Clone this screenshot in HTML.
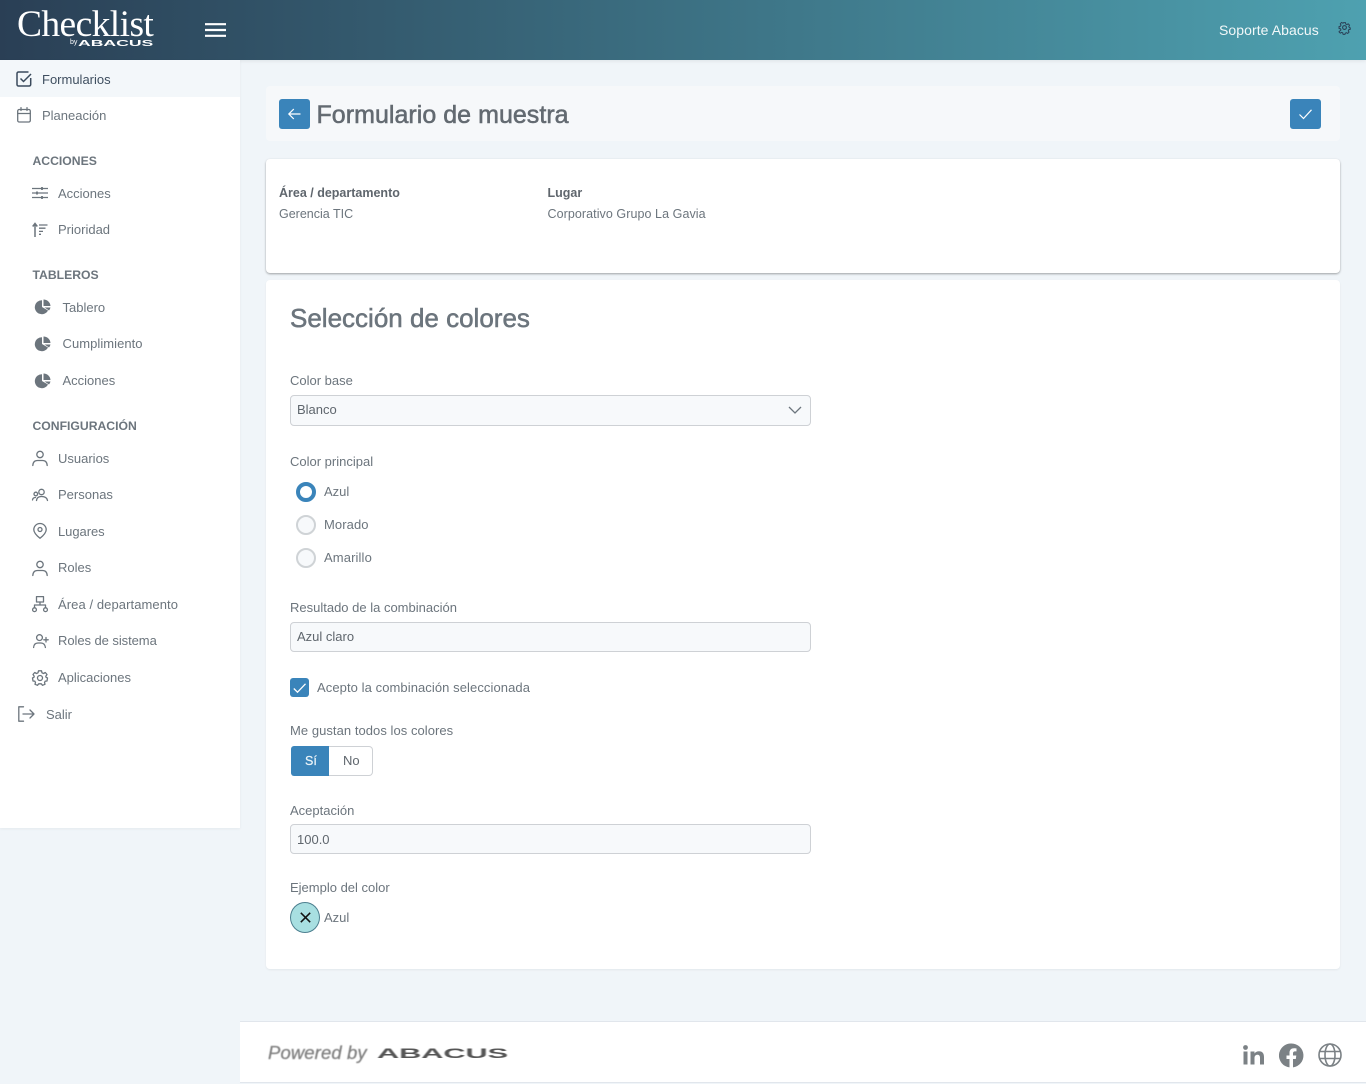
<!DOCTYPE html>
<html lang="es"><head><meta charset="utf-8"><title>Formulario de muestra</title>
<style>
html,body{margin:0;padding:0}
body{width:1366px;height:1084px;position:relative;overflow:hidden;background:#f0f5f9;font-family:"Liberation Sans",Arial,sans-serif;font-size:13px;color:#6c757d}
.a{position:absolute}
.t{position:absolute;white-space:nowrap;line-height:20px;height:20px}
.n{color:#6c757d;font-size:13px;margin-top:1px}
.h{font-weight:700;font-size:12.2px;color:#6c757d;margin-top:1px}
.l{color:#6c757d;font-size:13px;margin-top:1px}
.box{position:absolute;left:290px;width:519px;background:#f7f9fb;border:1px solid #ced1d5;border-radius:4px}
svg{position:absolute;overflow:visible}
.i{fill:none;stroke:#6c757d;stroke-width:1.3;stroke-linecap:round;stroke-linejoin:round}
.radio{position:absolute;left:296px;width:16px;height:16px;border:2px solid #cfd3d6;border-radius:50%;background:#f7f9fb}
</style></head><body>
<div class="a" style="left:0;top:0;width:1366px;height:60px;background:linear-gradient(90deg,#2a3f55 0%,#4ea1b0 100%);box-shadow:0 1px 4px rgba(0,0,0,.08)"></div>
<div class="t" style="left:17px;top:6px;height:38px;line-height:38px;font-family:'Liberation Serif',serif;font-size:37.5px;color:#fff;letter-spacing:-.6px">Checklist</div>
<div class="t" style="left:70px;top:38px;height:10px;line-height:10px;font-size:7px;color:#fff">by</div>
<div class="t" style="left:78px;top:39px;height:10px;line-height:10px;font-size:8px;font-weight:700;color:#fff;transform-origin:0 50%;transform:scaleX(2.2)">ABACUS</div>
<svg style="left:205px;top:23px" width="21" height="14"><path d="M0 1.2H21M0 7H21M0 12.8H21" stroke="#fff" stroke-width="2.2"/></svg>
<div class="t" style="left:1219px;top:20px;font-size:14px;color:#f2f8f9;letter-spacing:.07px">Soporte Abacus</div>
<svg style="left:1338px;top:21px" width="13" height="13" viewBox="0 0 24 24"><circle cx="12" cy="12" r="3.5" fill="none" stroke="#2a3f55" stroke-width="2"/><path d="M10 2h4l.6 3 2.4 1 2.6-1.6 2.8 2.8L20.800 9.800l1 2.400 2 .6v3l-3 .6-1 2.400 1.600 2.600-2.800 2.800-2.600-1.600-2.400 1-.6 2.400h-4l-.6-3-2.400-1-2.600 1.600-2.800-2.800L4.800 17l-1-2.400-3-.6v-4l3-.6 1-2.400L3.200 4.400 6 1.600 8.600 3.200 9.400 3z" transform="translate(1.200 1.200) scale(.9)" fill="none" stroke="#2a3f55" stroke-width="2" stroke-linejoin="round"/></svg>

<div class="a" style="left:0;top:60px;width:240px;height:768px;background:#fff;box-shadow:0 1px 3px rgba(0,0,0,.05)"></div>
<div class="a" style="left:0;top:60px;width:240px;height:37px;background:#f3f7fa"></div>

<svg style="left:16px;top:71px" width="16" height="16" viewBox="0 0 16 16"><path d="M14.700 7V13.500a1.500 1.500 0 0 1-1.500 1.500H2.500A1.500 1.500 0 0 1 1 13.500V2.500A1.500 1.500 0 0 1 2.500 1H12.500" fill="none" stroke="#3a4a5c" stroke-width="1.500"/><path d="M4.500 7.500L7.500 10.500L15 3" fill="none" stroke="#3a4a5c" stroke-width="1.500"/></svg>
<div class="t" style="left:42px;top:70px;color:#3f4f60;font-size:13px">Formularios</div>
<svg style="left:17px;top:107px" width="14" height="16" viewBox="0 0 14 16"><rect x=".7" y="2.500" width="12.600" height="12.500" rx="1.500" class="i"/><path d="M.7 6.500H13.300M4 .7V3.500M10 .7V3.500" class="i"/></svg>
<div class="t n" style="left:42px;top:105px">Planeación</div>

<div class="t h" style="left:32.500px;top:150px">ACCIONES</div>
<svg style="left:32px;top:186px" width="16" height="14" viewBox="0 0 16 14"><path d="M0 2.500H16M0 7H16M0 11.500H16" stroke="#6c757d" stroke-width="1.200"/><path d="M10 1V4M5 5.500V8.500M10 10V13" stroke="#6c757d" stroke-width="1.800"/></svg>
<div class="t n" style="left:58px;top:183px">Acciones</div>
<svg style="left:32px;top:222px" width="16" height="16" viewBox="0 0 16 16"><path d="M3 15V2M.7 4.500L3 1.500L5.300 4.500" fill="none" stroke="#6c757d" stroke-width="1.500"/><path d="M7 3H15.500M7 6.200H13.500M7 9.400H11M7 12.300H9" stroke="#6c757d" stroke-width="1.300"/></svg>
<div class="t n" style="left:58px;top:219px">Prioridad</div>

<div class="t h" style="left:32.500px;top:264px">TABLEROS</div>
<svg style="left:34.500px;top:299px" width="16" height="16" viewBox="0 0 16 16"><path d="M7 1.200A7 7 0 1 0 13 11.500L7 8z" fill="#6c757d"/><path d="M8.500 .5A7 7 0 0 1 15.500 7H8.500z" fill="#6c757d"/><path d="M9.500 8.500H15.500A7 7 0 0 1 14 11.500z" fill="#6c757d"/></svg>
<div class="t n" style="left:62.500px;top:297px">Tablero</div>
<svg style="left:34.500px;top:336px" width="16" height="16" viewBox="0 0 16 16"><path d="M7 1.200A7 7 0 1 0 13 11.500L7 8z" fill="#6c757d"/><path d="M8.500 .5A7 7 0 0 1 15.500 7H8.500z" fill="#6c757d"/><path d="M9.500 8.500H15.500A7 7 0 0 1 14 11.500z" fill="#6c757d"/></svg>
<div class="t n" style="left:62.500px;top:333px;letter-spacing:.05px">Cumplimiento</div>
<svg style="left:34.500px;top:373px" width="16" height="16" viewBox="0 0 16 16"><path d="M7 1.200A7 7 0 1 0 13 11.500L7 8z" fill="#6c757d"/><path d="M8.500 .5A7 7 0 0 1 15.500 7H8.500z" fill="#6c757d"/><path d="M9.500 8.500H15.500A7 7 0 0 1 14 11.500z" fill="#6c757d"/></svg>
<div class="t n" style="left:62.500px;top:370px">Acciones</div>

<div class="t h" style="left:32.500px;top:415px">CONFIGURACIÓN</div>
<svg style="left:32px;top:450px" width="16" height="16" viewBox="0 0 16 16"><circle cx="8" cy="4.500" r="3.200" class="i"/><path d="M.8 15.500C1 12 3 10.500 5.500 10.500H10.500C13 10.500 15 12 15.200 15.500" class="i"/></svg>
<div class="t n" style="left:58px;top:448px">Usuarios</div>
<svg style="left:32px;top:487px" width="16" height="15" viewBox="0 0 16 15"><circle cx="9.500" cy="5" r="2.700" class="i" stroke-width="1.100"/><circle cx="3.800" cy="7" r="1.800" class="i" stroke-width="1.100"/><path d="M4.500 13.500C4.800 10.500 6.500 9.500 9.500 9.500S15 10.500 15.500 13.500M.5 13C.7 11.300 1.500 10.500 3.500 10.500" class="i" stroke-width="1.100"/></svg>
<div class="t n" style="left:58px;top:484px">Personas</div>
<svg style="left:33px;top:523px" width="14" height="16" viewBox="0 0 14 16"><path d="M7 15.300C3 12 .8 9.500 .8 6.700A6.200 6.200 0 0 1 13.200 6.700C13.200 9.500 11 12 7 15.300z" class="i"/><circle cx="7" cy="6.500" r="2" class="i"/></svg>
<div class="t n" style="left:58px;top:521px;letter-spacing:-.05px">Lugares</div>
<svg style="left:32px;top:560px" width="16" height="16" viewBox="0 0 16 16"><circle cx="8" cy="4.500" r="3.200" class="i"/><path d="M.8 15.500C1 12 3 10.500 5.500 10.500H10.500C13 10.500 15 12 15.200 15.500" class="i"/></svg>
<div class="t n" style="left:58px;top:557px">Roles</div>
<svg style="left:32px;top:596px" width="16" height="16" viewBox="0 0 16 16"><rect x="4.500" y=".6" width="7" height="5.400" class="i" stroke-width="1"/><path d="M8 6V9M2.500 11.500V9H13.500V11.500" class="i" stroke-width="1"/><circle cx="2.500" cy="13.700" r="1.900" class="i" stroke-width="1"/><circle cx="13.500" cy="13.700" r="1.900" class="i" stroke-width="1"/></svg>
<div class="t n" style="left:58px;top:594px;letter-spacing:.08px">Área / departamento</div>
<svg style="left:33px;top:634px" width="16" height="14" viewBox="0 0 16 14"><circle cx="6.500" cy="3.600" r="2.900" class="i" stroke-width="1.200"/><path d="M.6 13.500C.8 10.500 2.500 9 5 9H8C10.500 9 12 10.500 12.400 13.500M13 3.500V8M10.800 5.800H15.200" class="i" stroke-width="1.200"/></svg>
<div class="t n" style="left:58px;top:630px;letter-spacing:-.06px">Roles de sistema</div>
<svg style="left:32px;top:670px" width="16" height="16" viewBox="0 0 16 16"><circle cx="8" cy="8" r="2.500" class="i" stroke-width="1.100"/><path d="M6.500.8H9.500L10 2.800L11.500 3.500L13.300 2.500L15 4.500L13.800 6.200L14 7.200L15.500 8L15 11L13.200 11.200L12.500 12.500L13 14.300L10.500 15.300L9.300 13.800H6.700L5.500 15.300L3 14.300L3.500 12.500L2.800 11.200L1 11L.5 8L2 7.200L2.200 6.200L1 4.500L2.700 2.500L4.500 3.500L6 2.800z" class="i" stroke-width="1.100"/></svg>
<div class="t n" style="left:58px;top:667px">Aplicaciones</div>
<svg style="left:18px;top:706px" width="17" height="16" viewBox="0 0 17 16"><path d="M5.500 .8H.8V15.200H5.500" class="i"/><path d="M5 8H16M12 4L16 8L12 12" class="i"/></svg>
<div class="t n" style="left:46px;top:704px">Salir</div>

<div class="a" style="left:266px;top:86px;width:1074px;height:55px;background:#f6f8fa;border-radius:4px"></div>
<div class="a" style="left:279px;top:99px;width:31px;height:30px;background:#3a84ba;border-radius:3px"></div>
<svg style="left:288px;top:108px" width="13" height="12" viewBox="0 0 13 12"><path d="M12.500 6H1M5.800 1L.8 6L5.800 11" fill="none" stroke="#fff" stroke-width="1.200"/></svg>
<div class="t" style="left:316.500px;top:100px;height:30px;line-height:30px;font-size:25px;font-weight:400;color:#636a71;-webkit-text-stroke:.55px #636a71;letter-spacing:.03px">Formulario de muestra</div>
<div class="a" style="left:1290px;top:99px;width:31px;height:30px;background:#3a84ba;border-radius:3px"></div>
<svg style="left:1299px;top:109px" width="13" height="10" viewBox="0 0 13 10"><path d="M.5 5.500L4.500 9.500L12.500 .8" fill="none" stroke="#fff" stroke-width="1.200"/></svg>

<div class="a" style="left:266px;top:159px;width:1074px;height:114px;background:#fff;border-radius:4px;box-shadow:0 1px 2px rgba(0,0,0,.35)"></div>
<div class="t" style="left:279px;top:183px;font-weight:700;font-size:12.500px;color:#5f666d">Área / departamento</div>
<div class="t" style="left:279px;top:204px;font-size:12.500px;color:#6c757d">Gerencia TIC</div>
<div class="t" style="left:547.500px;top:183px;font-weight:700;font-size:12.500px;color:#5f666d">Lugar</div>
<div class="t" style="left:547.500px;top:204px;font-size:12.500px;color:#6c757d;letter-spacing:.07px">Corporativo Grupo La Gavia</div>

<div class="a" style="left:266px;top:280px;width:1074px;height:689px;background:#fff;border-radius:4px;box-shadow:0 1px 2px rgba(0,0,0,.06)"></div>
<div class="t" style="left:290px;top:302px;height:32px;line-height:32px;font-size:26px;color:#6c757d;-webkit-text-stroke:.55px #6c757d">Selección de colores</div>

<div class="t l" style="left:290px;top:370px">Color base</div>
<div class="box" style="top:395px;height:29px"></div>
<div class="t" style="left:297px;top:400px;color:#5f666d">Blanco</div>
<svg style="left:788px;top:406px" width="14" height="8" viewBox="0 0 14 8"><path d="M1 1L7 7L13 1" fill="none" stroke="#6c757d" stroke-width="1.300"/></svg>

<div class="t l" style="left:290px;top:451px">Color principal</div>
<div class="radio" style="top:482px;border:4px solid #3a84ba;width:12px;height:12px;background:#fff"></div>
<div class="t l" style="left:324px;top:481px">Azul</div>
<div class="radio" style="top:515px"></div>
<div class="t l" style="left:324px;top:514px;letter-spacing:.08px">Morado</div>
<div class="radio" style="top:548px"></div>
<div class="t l" style="left:324px;top:547px;letter-spacing:.12px">Amarillo</div>

<div class="t l" style="left:290px;top:597px">Resultado de la combinación</div>
<div class="box" style="top:622px;height:28px"></div>
<div class="t" style="left:297px;top:627px;color:#5f666d">Azul claro</div>

<div class="a" style="left:290px;top:678px;width:19px;height:19px;background:#3a84ba;border-radius:3px"></div>
<svg style="left:293px;top:683px" width="13" height="10" viewBox="0 0 13 10"><path d="M.8 5.500L4.500 9.200L12.500 .8" fill="none" stroke="#fff" stroke-width="1.300"/></svg>
<div class="t l" style="left:317px;top:677px;letter-spacing:.08px">Acepto la combinación seleccionada</div>

<div class="t l" style="left:290px;top:720px;letter-spacing:.05px">Me gustan todos los colores</div>
<div class="a" style="left:291px;top:746px;width:38px;height:30px;background:#3a84ba;border-radius:3px 0 0 3px"></div>
<div class="a" style="left:329px;top:746px;width:43px;height:28px;background:#fff;border:1px solid #ced1d5;border-left:0;border-radius:0 4px 4px 0"></div>
<div class="t" style="left:305px;top:751px;color:#eaf3f8;font-size:12.500px;-webkit-text-stroke:.25px #eaf3f8">Sí</div>
<div class="t" style="left:343px;top:751px;color:#5f666d">No</div>

<div class="t l" style="left:290px;top:800px">Aceptación</div>
<div class="box" style="top:824px;height:28px"></div>
<div class="t" style="left:297px;top:830px;color:#5f666d">100.0</div>

<div class="t l" style="left:290px;top:877px">Ejemplo del color</div>
<div class="a" style="left:290px;top:902px;width:28px;height:29px;border:1px solid #4c7f8f;border-radius:50%;background:#a8dfe1"></div>
<svg style="left:300px;top:912px" width="11" height="11" viewBox="0 0 11 11"><path d="M.8 .8L10.200 10.200M10.200 .8L.8 10.200" stroke="#111" stroke-width="1.500"/></svg>
<div class="t l" style="left:324px;top:907px">Azul</div>

<div class="a" style="left:240px;top:1021px;width:1126px;height:62px;background:#fff;border-top:1px solid #e1e6ec;border-bottom:1px solid #e1e6ec;box-sizing:border-box"></div>
<div class="t" style="left:268px;top:1043px;font-style:italic;font-size:18.500px;color:#808080;letter-spacing:.1px;filter:blur(.4px);-webkit-text-stroke:.3px #808080">Powered by</div>
<div class="t" style="left:377px;top:1044px;font-size:13.500px;font-weight:700;color:#555;transform-origin:0 50%;transform:scaleX(2.27);filter:blur(.3px)">ABACUS</div>
<svg style="left:1243px;top:1045px" width="21" height="20" viewBox="0 0 21 20"><rect x=".5" y="6.500" width="4" height="13" fill="#7b8185"/><circle cx="2.500" cy="2.500" r="2.400" fill="#7b8185"/><path d="M7.500 6.500H11.500V8.500C12.500 7 14 6.200 16 6.200C19.500 6.200 21 8.500 21 12V19.500H17V12.800C17 11 16.300 9.800 14.500 9.800C12.700 9.800 11.500 11 11.500 13V19.500H7.500z" fill="#7b8185"/></svg>
<svg style="left:1279px;top:1043px" width="25" height="25" viewBox="0 0 25 25"><path d="M12.500 .5A12 12 0 0 0 10.500 24.400V16H7.500V12.500H10.500V9.800C10.500 6.800 12.300 5.200 15 5.200C16.300 5.200 17.500 5.400 17.500 5.400V8.400H16C14.500 8.400 14 9.300 14 10.300V12.500H17.300L16.800 16H14V24.400A12 12 0 0 0 12.500 .5z" fill="#7b8185"/></svg>
<svg style="left:1318px;top:1043px" width="24" height="24" viewBox="0 0 24 24"><circle cx="12" cy="12" r="11" fill="none" stroke="#7b8185" stroke-width="1.600"/><ellipse cx="12" cy="12" rx="5" ry="11" fill="none" stroke="#7b8185" stroke-width="1.600"/><path d="M1.500 8.500H22.500M1.500 15.500H22.500" stroke="#7b8185" stroke-width="1.600"/></svg>
</body></html>
